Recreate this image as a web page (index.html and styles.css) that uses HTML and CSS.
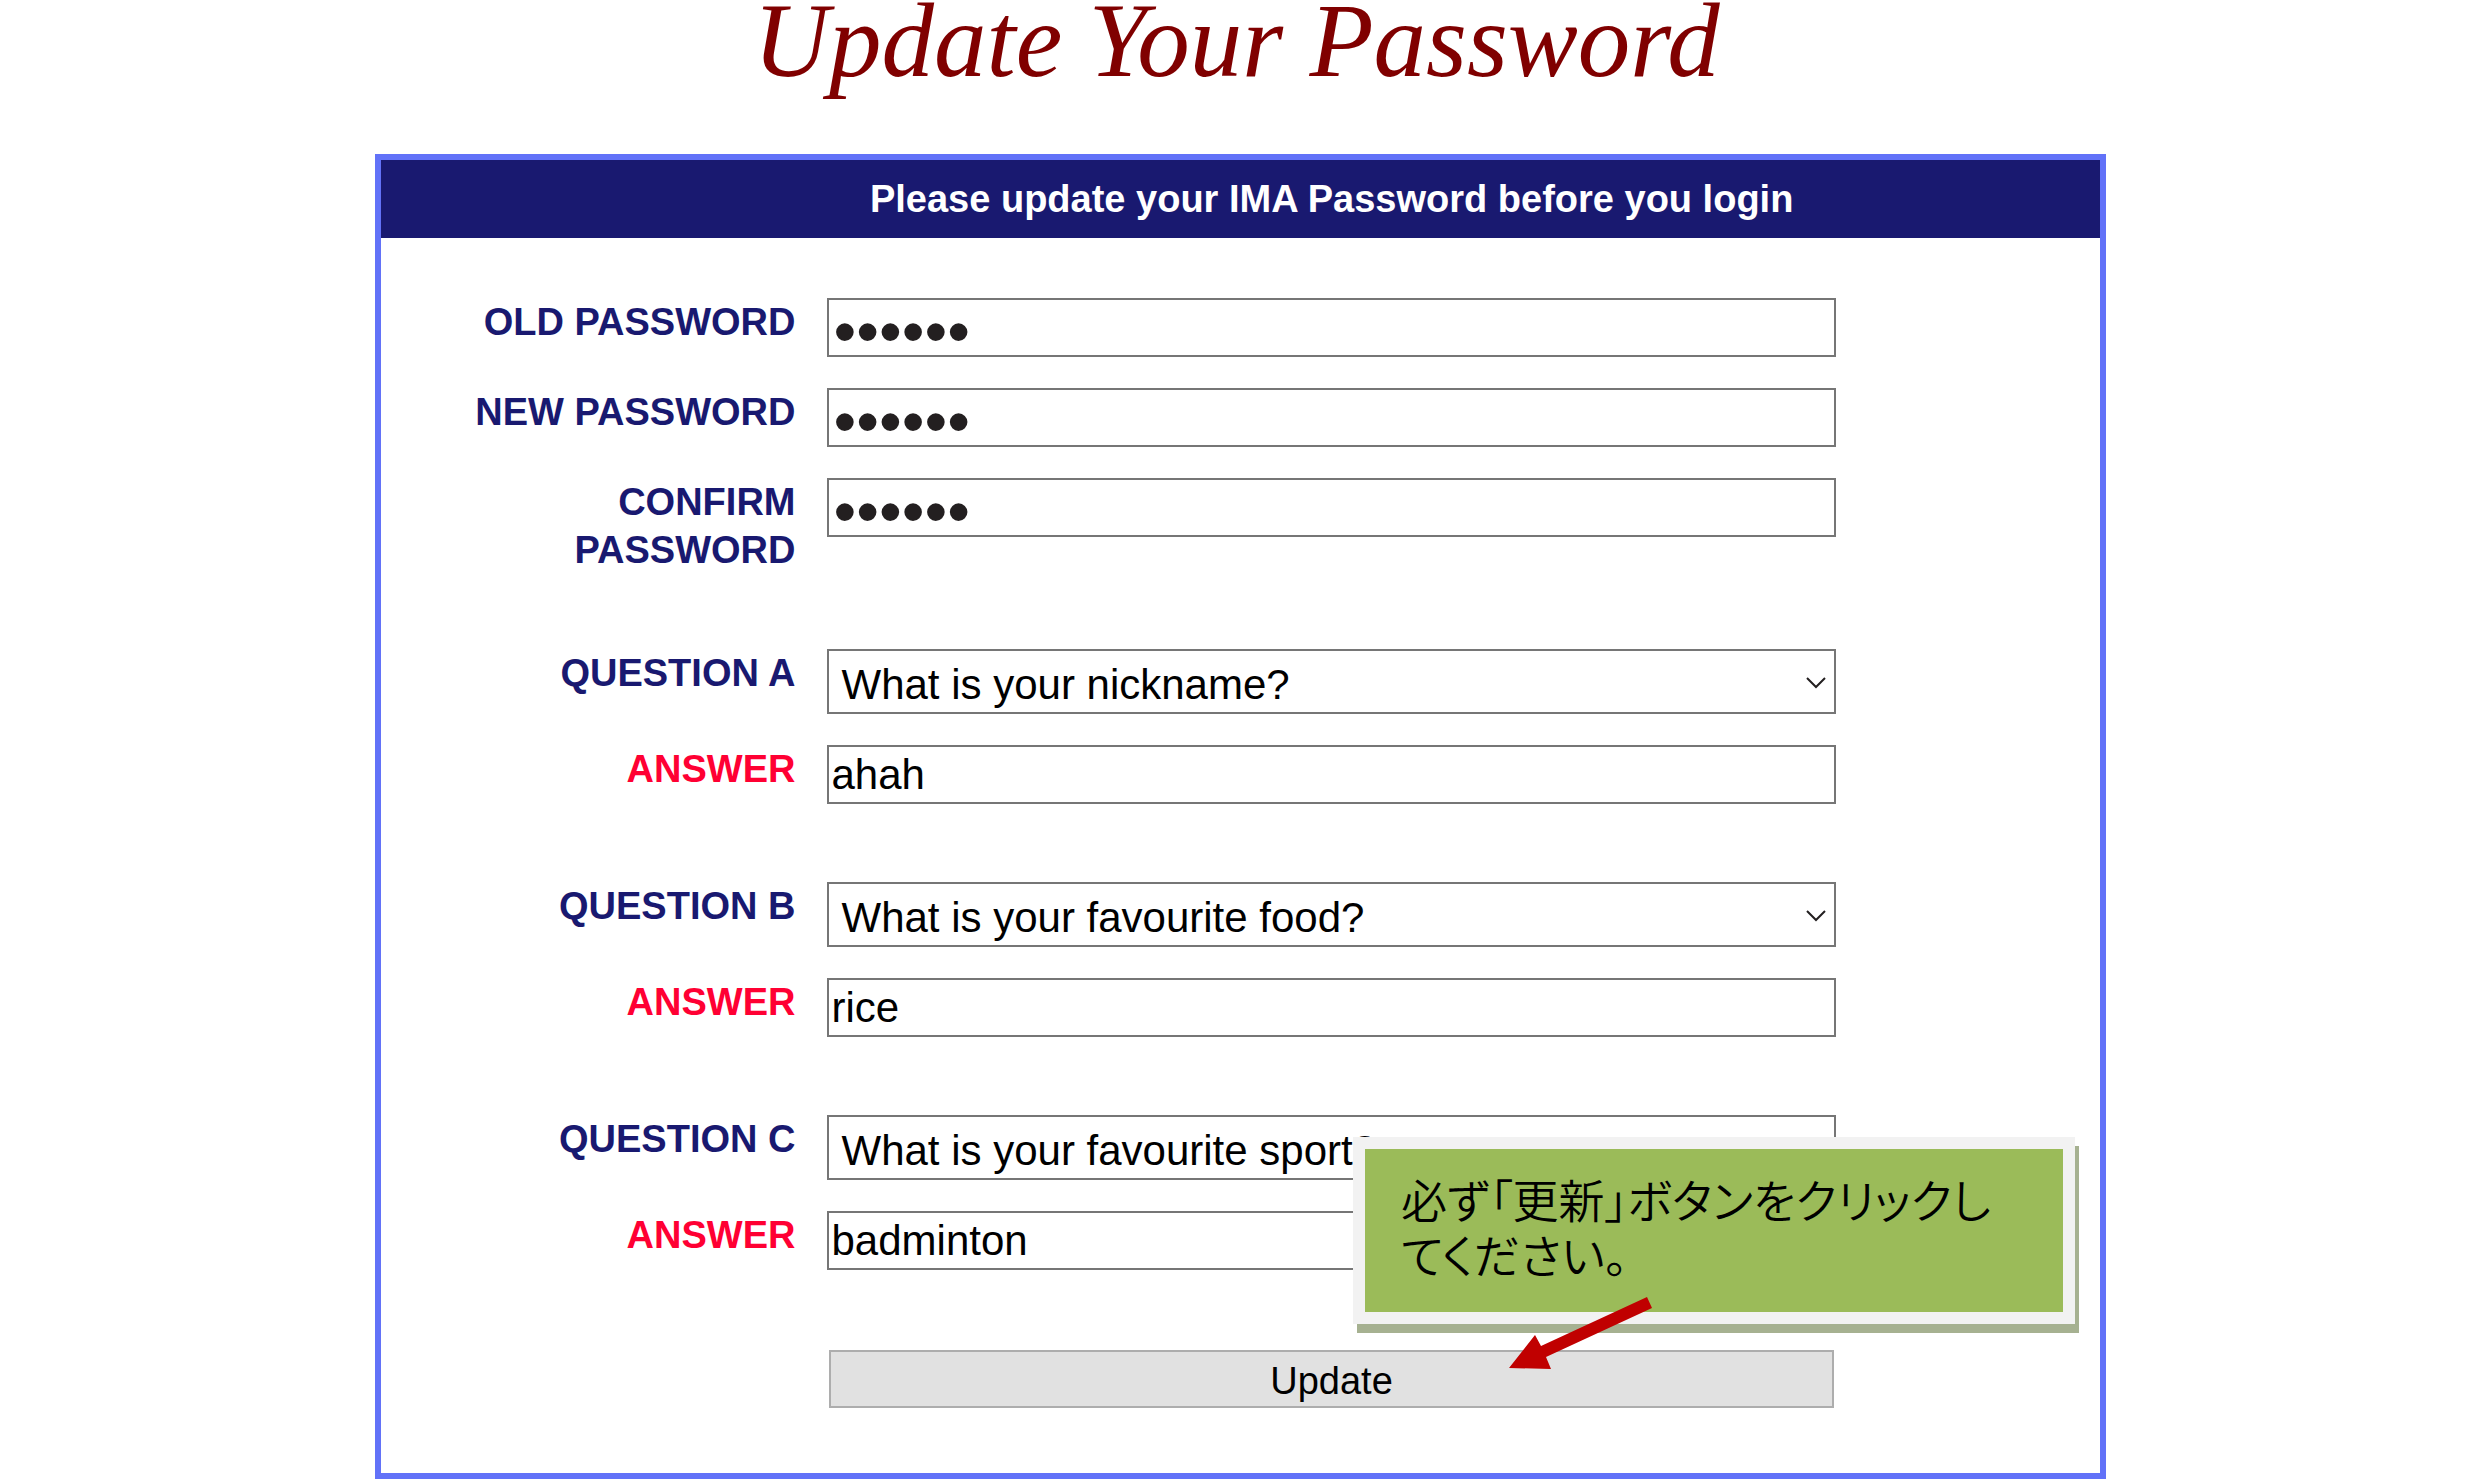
FILE: index.html
```html
<!DOCTYPE html>
<html lang="en">
<head>
<meta charset="utf-8">
<title>Update Your Password</title>
<link rel="stylesheet" href="styles.css">
</head>
<body>
<main class="page">
  <h1 class="title">Update Your Password</h1>
  <section class="card">
    <h2 class="card-header">Please update your IMA Password before you login</h2>
    <form class="form">
      <div class="group group-passwords">
        <label class="label" for="old">OLD PASSWORD</label>
        <input class="field password" id="old" type="password" value="secret">
        <label class="label" for="new">NEW PASSWORD</label>
        <input class="field password" id="new" type="password" value="secret">
        <label class="label" for="confirm">CONFIRM PASSWORD</label>
        <input class="field password" id="confirm" type="password" value="secret">
      </div>
      <div class="group">
        <label class="label" for="qa">QUESTION A</label>
        <div class="select-wrap">
          <select class="field select" id="qa"><option>What is your nickname?</option></select>
          <svg class="chevron" viewBox="0 0 20 12" aria-hidden="true"><path d="M1 1l9 9 9-9"/></svg>
        </div>
        <label class="label answer" for="aa">ANSWER</label>
        <input class="field" id="aa" type="text" value="ahah">
      </div>
      <div class="group">
        <label class="label" for="qb">QUESTION B</label>
        <div class="select-wrap">
          <select class="field select" id="qb"><option>What is your favourite food?</option></select>
          <svg class="chevron" viewBox="0 0 20 12" aria-hidden="true"><path d="M1 1l9 9 9-9"/></svg>
        </div>
        <label class="label answer" for="ab">ANSWER</label>
        <input class="field" id="ab" type="text" value="rice">
      </div>
      <div class="group">
        <label class="label" for="qc">QUESTION C</label>
        <div class="select-wrap">
          <select class="field select" id="qc"><option>What is your favourite sport?</option></select>
          <svg class="chevron" viewBox="0 0 20 12" aria-hidden="true"><path d="M1 1l9 9 9-9"/></svg>
        </div>
        <label class="label answer" for="ac">ANSWER</label>
        <input class="field" id="ac" type="text" value="badminton">
      </div>
      <div class="group actions">
        <button class="submit" type="button">Update</button>
      </div>
    </form>
    <aside class="callout" lang="ja">
      <p class="callout-text">必ず「更新」ボタンをクリックしてください。</p>
      <svg class="arrow" viewBox="0 0 144 74" aria-hidden="true"><path d="M138 1l5 11L37 61l5 12L0 72 26 39l6 11z"/></svg>
    </aside>
  </section>
</main>
</body>
</html>
```
FILE: styles.css
```css
* { box-sizing: border-box; }

body {
  margin: 0;
  background: #fff;
  font-family: "Liberation Sans", Arial, sans-serif;
}

.page { padding: 0 15.1% 3px; }

.title {
  margin: 0 0 72px;
  padding-right: 8px;
  color: #800000;
  font-family: "Liberation Serif", "Times New Roman", serif;
  font-size: 105px;
  font-style: italic;
  font-weight: 400;
  line-height: 82px;
  text-align: center;
}

.card {
  position: relative;
  border: 6px solid #6272f8;
}

.card-header {
  margin: 0;
  padding: 0 15.4% 0 26%;
  background: #191970;
  color: #fff;
  font-size: 38px;
  line-height: 78px;
  text-align: center;
  white-space: nowrap;
}

.form {
  display: flex;
  flex-direction: column;
  gap: 78px;
  padding: 60px 15.4% 65px 4.5%;
}

.group {
  display: grid;
  grid-template-columns: 24.5% 1fr;
  gap: 31px 32px;
  align-items: start;
}

.group-passwords { margin-bottom: -3px; }

.actions { margin-top: 2px; }

.label {
  color: #191970;
  font-size: 38px;
  font-weight: 700;
  line-height: 48px;
  text-align: right;
}

.answer { color: #ff0033; }

.field {
  display: block;
  width: 100%;
  height: 59px;
  margin: 0;
  padding: 0 2px;
  border: 2px solid #767676;
  border-radius: 0;
  background: #fff;
  color: #000;
  font-family: inherit;
  font-size: 42px;
}

.password {
  padding: 7px 4px 0;
  color: #231f20;
  font-size: 65px;
}

.select-wrap { position: relative; }

.select {
  height: 65px;
  padding: 5px 48px 0 12px;
  appearance: none;
}

.chevron {
  position: absolute;
  top: 28px;
  right: 10px;
  width: 20px;
  height: 12px;
  fill: none;
  stroke: #231f20;
  stroke-width: 2;
  pointer-events: none;
}

.submit {
  grid-column: 2;
  height: 58px;
  margin: 0 2px;
  padding: 4px 0 0;
  border: 2px solid #adadad;
  background: #e1e1e1;
  color: #000;
  font-family: inherit;
  font-size: 38px;
}

.callout {
  position: absolute;
  right: 25px;
  bottom: 149px;
  width: 42%;
  padding: 22px 60px 31px 36px;
  border: 12px solid #f2f2f2;
  background: #9bbb59;
  box-shadow: 4px 9px 0 #a6b191;
}

.callout-text {
  margin: 0;
  color: #000;
  font-family: "Noto Sans CJK JP", sans-serif;
  font-feature-settings: "palt";
  font-size: 46px;
  font-weight: 350;
  line-height: 55px;
}

.arrow {
  position: absolute;
  top: 147px;
  left: 144px;
  width: 144px;
  height: 74px;
  fill: #c00000;
}
```
